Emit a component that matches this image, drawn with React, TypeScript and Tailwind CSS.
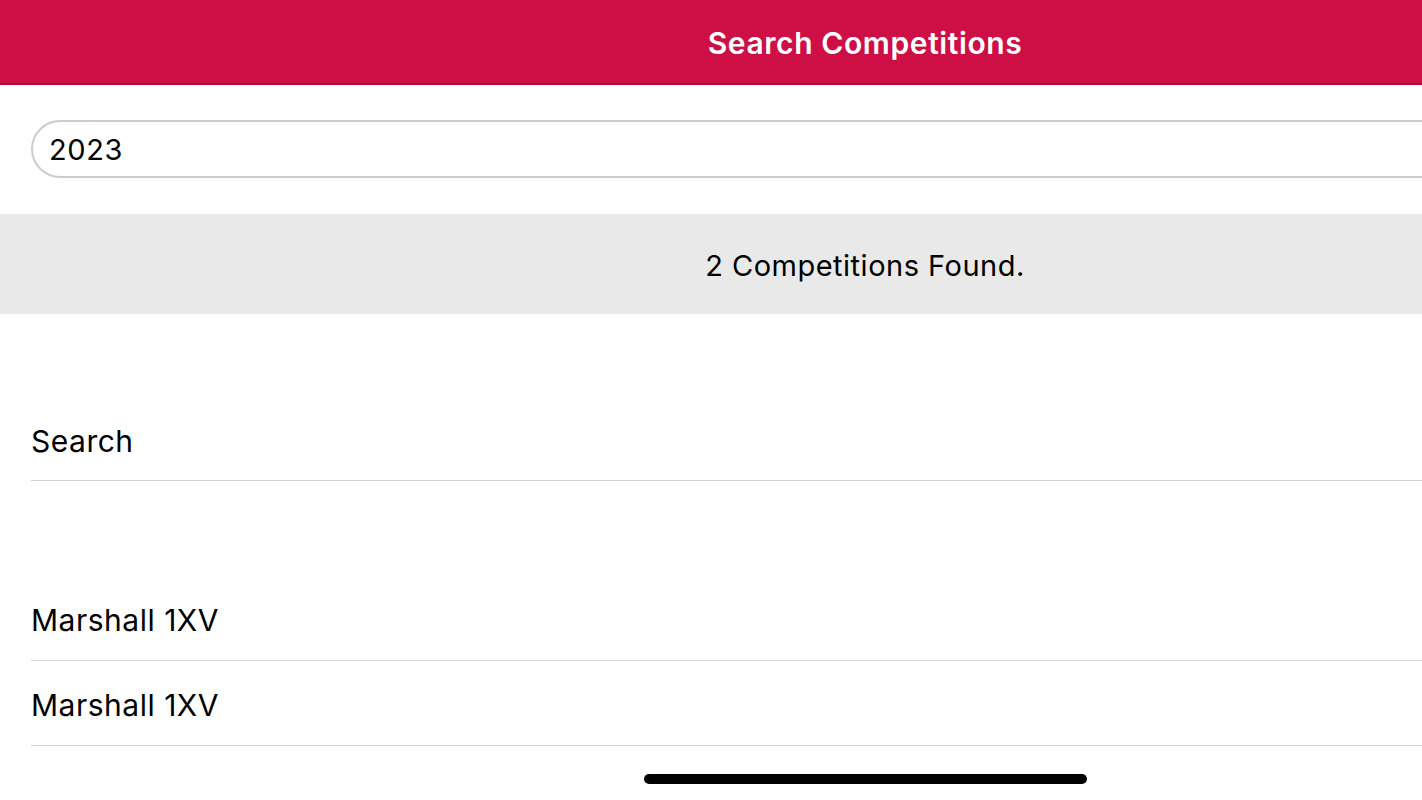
import React from "react";

export default function App() {
  return (
    <div className="w-[1422px] h-[800px] overflow-hidden bg-white" style={{ fontFamily: "Inter, 'Noto Sans', sans-serif" }}>
      <div className="w-[1730px] h-[800px] flex flex-col">
        <header className="h-[85px] bg-[#ce0f46] border-b-2 border-[#b80c3d] flex items-center justify-center">
          <h1 className="text-white text-[30px] font-semibold tracking-[0.6px] leading-none mt-[2px]">Search Competitions</h1>
        </header>
        <div className="px-[31px] pt-[35px] pb-[36px]">
          <div className="h-[58px] rounded-full border-2 border-[#cccccc] flex items-center pl-[16px] pt-[2px] text-[29px] tracking-[0.6px] text-black">2023</div>
        </div>
        <div className="h-[100px] bg-[#e9e9e9] flex items-center justify-center pt-[3px] text-[29px] tracking-[0.5px] text-black">2 Competitions Found.</div>
        <div className="pl-[31px] pt-[82px]">
          <div className="h-[85px] border-b border-[#d4d4d4] flex items-center text-[30px] tracking-[0.5px] text-black pt-[6px]">Search</div>
          <div className="h-[95px]" />
          <div className="h-[85px] border-b border-[#d4d4d4] flex items-center text-[30px] tracking-[0.5px] text-black pt-[4px]">Marshall 1XV</div>
          <div className="h-[85px] border-b border-[#d4d4d4] flex items-center text-[30px] tracking-[0.5px] text-black pt-[4px]">Marshall 1XV</div>
        </div>
        <div className="flex justify-center pt-[28px]">
          <div className="w-[443px] h-[10px] rounded-full bg-black" />
        </div>
      </div>
    </div>
  );
}
